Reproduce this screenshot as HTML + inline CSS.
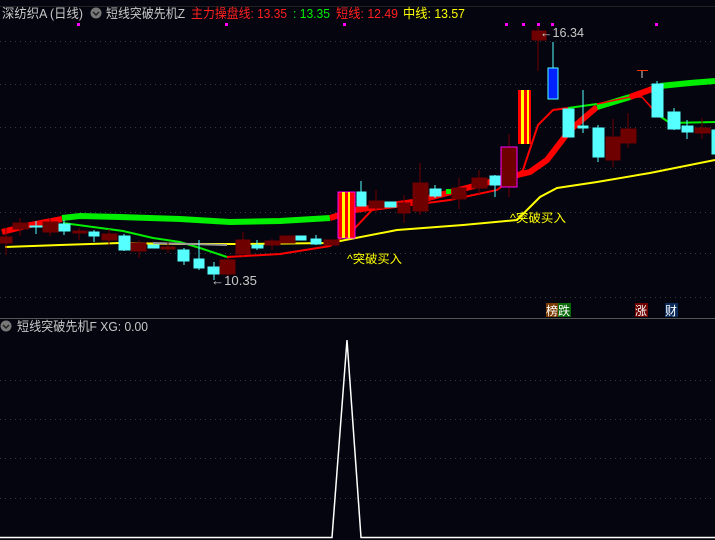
<!DOCTYPE html>
<html><head><meta charset="utf-8"><style>
html,body{margin:0;padding:0;background:#05050f;}
svg{display:block}
text{font-family:"Liberation Sans","Noto Sans CJK SC",sans-serif;}
</style></head><body>
<svg width="715" height="540" viewBox="0 0 715 540" xmlns="http://www.w3.org/2000/svg">
<rect width="715" height="540" fill="#05050f"/>
<g stroke="#3a3a44" stroke-width="1" stroke-dasharray="1 4">
<line x1="0" y1="41.5" x2="715" y2="41.5"/><line x1="0" y1="84.5" x2="715" y2="84.5"/>
<line x1="0" y1="127.5" x2="715" y2="127.5"/><line x1="0" y1="168.5" x2="715" y2="168.5"/>
<line x1="0" y1="212.5" x2="715" y2="212.5"/><line x1="0" y1="253.5" x2="715" y2="253.5"/>
<line x1="0" y1="297.5" x2="715" y2="297.5"/>
<line x1="0" y1="380.5" x2="715" y2="380.5"/><line x1="0" y1="419.5" x2="715" y2="419.5"/>
<line x1="0" y1="458.5" x2="715" y2="458.5"/><line x1="0" y1="498.5" x2="715" y2="498.5"/>
</g>
<line x1="0" y1="318.5" x2="715" y2="318.5" stroke="#555" stroke-width="1"/>
<line x1="0" y1="6.5" x2="715" y2="6.5" stroke="#222" stroke-width="1"/>
<g fill="#ff00ff"><rect x="77" y="23" width="3" height="3"/><rect x="225" y="23" width="3" height="3"/><rect x="343" y="23" width="3" height="3"/><rect x="505" y="23" width="3" height="3"/><rect x="522" y="23" width="3" height="3"/><rect x="537" y="23" width="3" height="3"/><rect x="551" y="23" width="3" height="3"/><rect x="655" y="23" width="3" height="3"/></g>
<polyline fill="none" stroke="#ffff00" stroke-width="2" points="5,247 60,245 120,243 180,244 240,244 330,243 397,230 463,225 517,220 540,197 557,188 597,182 650,173 715,160"/>
<polyline fill="none" stroke="#ff0000" stroke-width="6" points="2,232 30,225 62,219"/>
<polyline fill="none" stroke="#00ee00" stroke-width="6" points="62,218 80,216 120,217 180,219 230,222 280,221 330,218"/>
<polyline fill="none" stroke="#ff0000" stroke-width="6" points="330,218 355,210 413,202 497,180 530,172 547,160 570,130 597,107"/>
<polyline fill="none" stroke="#00ee00" stroke-width="6" points="597,107 630,97"/>
<polyline fill="none" stroke="#ff0000" stroke-width="6" points="630,97 655,88"/>
<polyline fill="none" stroke="#00ee00" stroke-width="6" points="660,86 690,83 715,81"/>
<polyline fill="none" stroke="#00ee00" stroke-width="2" points="63,223 123,231 153,238 180,242 200,248 227,257"/>
<polyline fill="none" stroke="#999" stroke-width="2" points="153,243 227,245"/>
<polyline fill="none" stroke="#ff0000" stroke-width="2" points="227,257 280,254 330,246 355,228 372,210 450,200 497,190 523,170 538,125 553,110 568,108"/>
<polyline fill="none" stroke="#00ee00" stroke-width="2" points="568,108 597,104"/>
<polyline fill="none" stroke="#ff0000" stroke-width="1.5" points="597,104 630,97 642,97 658,115"/>
<polyline fill="none" stroke="#00ee00" stroke-width="2" points="658,115 670,123 715,122"/>
<g>
<g fill="#6e0000" stroke="#6e0000">
<line x1="6" y1="228" x2="6" y2="255"/><rect x="0" y="237" width="12" height="6"/>
<line x1="20" y1="218" x2="20" y2="236"/><rect x="13" y="223" width="15" height="6"/>
<line x1="50" y1="218" x2="50" y2="236"/><rect x="43" y="222" width="15" height="10"/>
<line x1="79" y1="228" x2="79" y2="240"/><rect x="73" y="231" width="14" height="2"/>
<line x1="109" y1="229" x2="109" y2="245"/><rect x="102" y="234" width="15" height="6"/>
<line x1="139" y1="240" x2="139" y2="258"/><rect x="131" y="243" width="15" height="8"/>
<line x1="168" y1="242" x2="168" y2="253"/><rect x="161" y="247" width="14" height="2"/>
<line x1="228" y1="258" x2="228" y2="277"/><rect x="220" y="260" width="15" height="14"/>
<line x1="243" y1="232" x2="243" y2="258"/><rect x="236" y="240" width="14" height="14"/>
<line x1="272" y1="239" x2="272" y2="250"/><rect x="265" y="241" width="15" height="4"/>
<rect x="280" y="236" width="15" height="7"/>
<rect x="324" y="240" width="15" height="5"/>
<line x1="376" y1="190" x2="376" y2="213"/><rect x="369" y="201" width="15" height="7"/>
<line x1="404" y1="195" x2="404" y2="223"/><rect x="398" y="203" width="12" height="10"/>
<line x1="420" y1="163" x2="420" y2="215"/><rect x="413" y="183" width="15" height="28"/>
<line x1="459" y1="178" x2="459" y2="209"/><rect x="452" y="188" width="14" height="11"/>
<line x1="479" y1="170" x2="479" y2="194"/><rect x="472" y="178" width="15" height="10"/>
<line x1="509" y1="134" x2="509" y2="197"/><rect x="501" y="147" width="16" height="40"/>
<line x1="538" y1="27" x2="538" y2="71"/><rect x="532" y="31" width="14" height="9"/>
<line x1="613" y1="119" x2="613" y2="167"/><rect x="606" y="137" width="14" height="23"/>
<line x1="628" y1="113" x2="628" y2="148"/><rect x="621" y="129" width="15" height="14"/>
<line x1="702" y1="118" x2="702" y2="139"/><rect x="695" y="128" width="15" height="5"/>
</g>
<g fill="#55ffff" stroke="#55ffff">
<line x1="36" y1="221" x2="36" y2="234"/><rect x="30" y="226" width="12" height="1"/>
<line x1="64" y1="220" x2="64" y2="235"/><rect x="59" y="224" width="11" height="7"/>
<line x1="94" y1="230" x2="94" y2="242"/><rect x="89" y="232" width="10" height="4"/>
<line x1="124" y1="234" x2="124" y2="251"/><rect x="119" y="236" width="11" height="14"/>
<rect x="148" y="245" width="11" height="3"/>
<line x1="184" y1="248" x2="184" y2="265"/><rect x="178" y="250" width="11" height="11"/>
<line x1="199" y1="240" x2="199" y2="270"/><rect x="194" y="259" width="10" height="9"/>
<line x1="214" y1="262" x2="214" y2="280"/><rect x="208" y="267" width="11" height="7"/>
<line x1="257" y1="240" x2="257" y2="250"/><rect x="252" y="245" width="11" height="3"/>
<rect x="296" y="236" width="10" height="4"/>
<line x1="316" y1="235" x2="316" y2="245"/><rect x="311" y="239" width="10" height="5"/>
<line x1="361" y1="181" x2="361" y2="206"/><rect x="357" y="192" width="9" height="14"/>
<rect x="385" y="202" width="11" height="5"/>
<line x1="435" y1="185" x2="435" y2="198"/><rect x="430" y="189" width="11" height="7"/>
<line x1="495" y1="175" x2="495" y2="197"/><rect x="490" y="176" width="10" height="9"/>
<rect x="563" y="109" width="11" height="28"/>
<line x1="583" y1="90" x2="583" y2="133"/><rect x="578" y="126" width="10" height="2"/>
<line x1="598" y1="125" x2="598" y2="162"/><rect x="593" y="128" width="11" height="29"/>
<line x1="657" y1="81" x2="657" y2="117"/><rect x="652" y="84" width="11" height="33"/>
<line x1="674" y1="108" x2="674" y2="130"/><rect x="668" y="112" width="12" height="17"/>
<line x1="687" y1="120" x2="687" y2="139"/><rect x="682" y="126" width="11" height="6"/>
<rect x="712" y="130" width="4" height="24"/>
</g>
<line x1="553" y1="42" x2="553" y2="68" stroke="#55ffff"/>
<rect x="548" y="68" width="10" height="31" fill="#0022ff" stroke="#55ffff"/>
<rect x="446" y="189" width="5" height="5" fill="#00ee00"/>
<line x1="642" y1="70" x2="642" y2="78" stroke="#ccc"/><line x1="637" y1="70.5" x2="648" y2="70.5" stroke="#ff3300"/>
<rect x="338" y="192" width="17" height="46" fill="#ff0000" stroke="#ff00ff"/>
<rect x="342" y="192" width="3" height="46" fill="#ffff00"/><rect x="348" y="192" width="2" height="46" fill="#ffff00"/>
<rect x="518" y="90" width="13" height="54" fill="#ff0000"/>
<rect x="521" y="90" width="3" height="54" fill="#ffff00"/><rect x="527" y="90" width="2" height="54" fill="#ffff00"/>
<rect x="501" y="147" width="16" height="40" fill="none" stroke="#ff00ff"/>
</g>
<text x="347" y="263" font-size="12" fill="#ffff00" textLength="55" lengthAdjust="spacingAndGlyphs">^突破买入</text>
<text x="510" y="222" font-size="12" fill="#ffff00" textLength="56" lengthAdjust="spacingAndGlyphs">^突破买入</text>
<text x="211" y="285" font-size="13" fill="#c8c8c8" textLength="46" lengthAdjust="spacingAndGlyphs">←10.35</text>
<text x="540" y="37" font-size="13" fill="#c8c8c8" textLength="44" lengthAdjust="spacingAndGlyphs">←16.34</text>
<rect x="546" y="303" width="12" height="14" fill="#7a3a00"/><text x="546" y="315" font-size="12" fill="#fff">榜</text>
<rect x="558" y="303" width="13" height="14" fill="#0a6a0a"/><text x="558" y="315" font-size="12" fill="#fff">跌</text>
<rect x="635" y="303" width="13" height="14" fill="#6e0000"/><text x="635" y="315" font-size="12" fill="#fff">涨</text>
<rect x="665" y="303" width="13" height="14" fill="#0a2a5a"/><text x="665" y="315" font-size="12" fill="#fff">财</text>
<text x="2" y="18" font-size="13" fill="#c8c8c8" textLength="81" lengthAdjust="spacingAndGlyphs">深纺织A (日线)</text>
<circle cx="96" cy="13" r="5.5" fill="#777"/><path d="M93 12 L96 15 L99 12" stroke="#222" stroke-width="1.5" fill="none"/>
<text x="106" y="18" font-size="13" fill="#c8c8c8" textLength="79" lengthAdjust="spacingAndGlyphs">短线突破先机Z</text>
<text x="191" y="18" font-size="13" fill="#ff2020" textLength="96" lengthAdjust="spacingAndGlyphs">主力操盘线: 13.35</text>
<text x="293" y="18" font-size="13" fill="#00ee00" textLength="37" lengthAdjust="spacingAndGlyphs">: 13.35</text>
<text x="336" y="18" font-size="13" fill="#ff2020" textLength="62" lengthAdjust="spacingAndGlyphs">短线: 12.49</text>
<text x="403" y="18" font-size="13" fill="#ffff00" textLength="62" lengthAdjust="spacingAndGlyphs">中线: 13.57</text>
<circle cx="6" cy="326" r="5.5" fill="#777"/><path d="M3 325 L6 328 L9 325" stroke="#222" stroke-width="1.5" fill="none"/>
<text x="17" y="331" font-size="13" fill="#c8c8c8" textLength="131" lengthAdjust="spacingAndGlyphs">短线突破先机F  XG: 0.00</text>
<polyline fill="none" stroke="#fff" stroke-width="1.5" points="0,537.5 332,537.5 347,340 361,537.5 715,537.5"/>
</svg>
</body></html>
